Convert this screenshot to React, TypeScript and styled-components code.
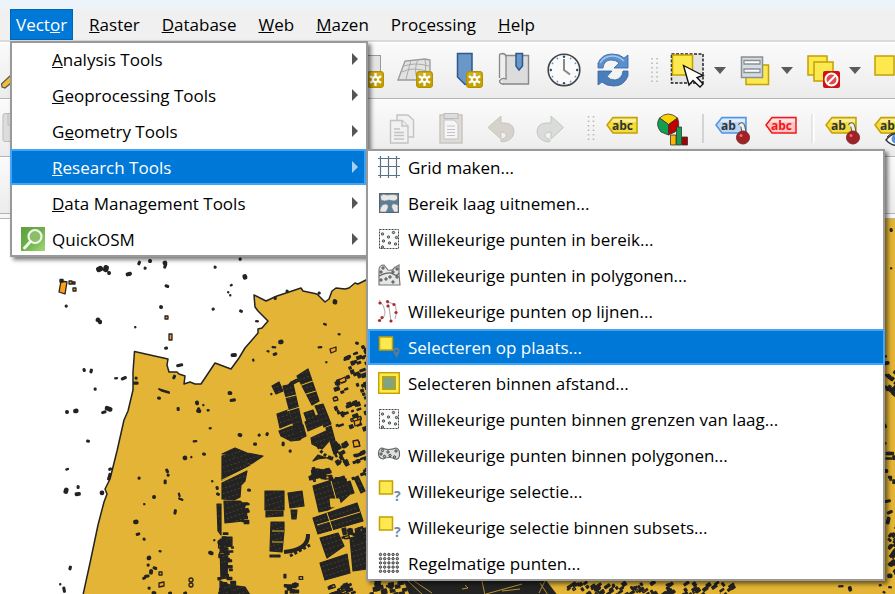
import React from 'react';
import styled, { createGlobalStyle, css } from 'styled-components';

const GlobalStyle = createGlobalStyle`
  *, *::before, *::after { box-sizing: border-box; }
  body { margin: 0; background: #fff; overflow: hidden; }
  body, button { font-family: "Open Sans", "Noto Sans", sans-serif; font-size: 17px; line-height: 24px; color: #000; }
  button { appearance: none; border: 0; margin: 0; padding: 0; background: none; text-align: left; }
  svg { display: block; }
`;

const Page = styled.div`
  display: flex;
  flex-direction: column;
  height: 100vh;
  overflow: hidden;
`;

const TitleStrip = styled.div`
  flex: 0 0 9px;
  background: #edf3fb;
`;

const MenuBar = styled.nav`
  flex: 0 0 32px;
  display: flex;
  align-items: flex-start;
  gap: 10px;
  padding-left: 10px;
  background: #f0f0f0;
  border-bottom: 2px solid #dadada;
`;

const MenuSlot = styled.div`
  position: relative;
`;

const MenuTitle = styled.button<{ $open?: boolean }>`
  display: block;
  height: 31px;
  padding: 0 5px;
  white-space: nowrap;
  border: 1px solid transparent;
  ${p => p.$open && css`
    background: #0078d7;
    border-color: #0065b5;
    color: #fff;
  `}
`;

const Menu = styled.div<{ $sub?: boolean }>`
  position: absolute;
  z-index: ${p => (p.$sub ? 3 : 2)};
  top: ${p => (p.$sub ? '0' : '32px')};
  left: ${p => (p.$sub ? '356px' : '0')};
  width: ${p => (p.$sub ? '519px' : '358px')};
  background: #fff;
  box-shadow: inset 0 0 0 2px #999, 3px 3px 4px rgba(0, 0, 0, 0.5);
`;

const ItemSlot = styled.div`
  position: relative;
`;

const Item = styled.button<{ $active?: boolean; $sub?: boolean }>`
  display: flex;
  align-items: center;
  width: calc(100% - 2px);
  margin-left: ${p => (p.$sub ? '2px' : '0')};
  height: 36px;
  padding: ${p => (p.$sub ? '0 8px 0 7px' : '0 5px 0 9px')};
  gap: ${p => (p.$sub ? '7px' : '6px')};
  white-space: nowrap;
  border: 2px solid transparent;
  ${p => p.$active && css`
    background: #0078d7;
    border-color: #42a5f5;
    color: #fff;
  `}
`;

const ItemIcon = styled.span<{ $sub?: boolean }>`
  flex: 0 0 ${p => (p.$sub ? '24px' : '25px')};
  height: 24px;
  svg { overflow: visible; }
`;

const ItemLabel = styled.span`
  flex: 1;
  padding-top: 2px;
`;

const ToolBar = styled.div`
  flex: 0 0 57px;
  display: flex;
  overflow: hidden;
  background: linear-gradient(#fbfbfb, #ececec);
  border-bottom: 1px solid #b4b4b4;
  box-shadow: inset 0 1px #fff;
`;

const LowerBar = styled(ToolBar)`
  flex-basis: 58px;
`;

const BarGap = styled.div`
  flex: 0 0 5px;
  background: #f7f7f7;
  border-bottom: 1px solid #b4b4b4;
`;

const Leading = styled.div<{ $w: number }>`
  flex: 0 0 ${p => p.$w}px;
`;

const Tool = styled.button<{ $w?: number }>`
  flex: 0 0 ${p => p.$w ?? 49}px;
  height: 56px;
`;

const MapCanvas = styled.main`
  flex: 1;
  min-height: 0;
  overflow: hidden;
  background: #fff;
  svg { width: 100%; height: 100%; }
`;

/* ---------- toolbar drawings ---------- */

const Art = ({ x, y, w, children }: { x: number; y: number; w: number; children: React.ReactNode }) => (
  <svg width={w} height={56} viewBox={`${x} ${y} ${w} 56`} aria-hidden="true">{children}</svg>
);

const Star = ({ x, y }: { x: number; y: number }) => (
  <g transform={`translate(${x} ${y})`}>
    <rect x="0.5" y="0.5" width="16" height="16" rx="2.5" fill="#c4a000" stroke="#b39200" />
    <rect x="1.5" y="1.5" width="14" height="6" rx="2" fill="#d6b93c" opacity=".6" />
    <g stroke="#fff" strokeWidth="2.2"><path d="M8.5 2V15M2.9 5.2L14.1 11.8M14.1 5.2L2.9 11.8" /></g>
    <circle cx="8.5" cy="8.5" r="3.6" fill="#fff" />
    <circle cx="8.5" cy="8.5" r="1.6" fill="#c4a000" />
  </g>
);

const Yellow = ({ x, y, s }: { x: number; y: number; s: number }) => (
  <rect x={x} y={y} width={s} height={s} fill="#fce94f" stroke="#c4a000" strokeWidth="1.5" />
);

const Arrow = ({ x }: { x: number }) => <path d={`M${x} 66H${x + 12}L${x + 6} 73Z`} fill="#5a5a5a" />;

const Grip = ({ x, y }: { x: number; y: number }) => (
  <g stroke="#b5b5b5" strokeWidth="1.5" strokeDasharray="1.5 3"><path d={`M${x} ${y}v25M${x + 5} ${y}v25`} /></g>
);

const Tag = ({ x, stroke, fill, text, color = '#2e3436' }: { x: number; stroke: string; fill: string; text: string; color?: string }) => (
  <g>
    <path d={`M${x + 1} 124L${x + 7} 116.5H${x + 31}V132H${x + 7}Z`} fill={fill} stroke={stroke} strokeWidth="1.5" />
    <path d={`M${x + 7} 118H${x + 30}V121H${x + 5}Z`} fill="#fff" opacity=".5" />
    <text x={x + 6} y="128.5" fontFamily="Open Sans" fontWeight="700" fontSize="12" fill={color}>{text}</text>
  </g>
);

const Pin = ({ x }: { x: number }) => (
  <g>
    <path d={`M${x - 2} 125Q${x} 122 ${x + 1} 126L${x + 2} 132`} fill="none" stroke="#555" strokeWidth="5" />
    <path d={`M${x - 2} 125Q${x} 122 ${x + 1} 126L${x + 2} 132`} fill="none" stroke="#eee" strokeWidth="3" />
    <circle cx={x + 1} cy="136.5" r="6.5" fill="#a32024" stroke="#7d2b2d" />
    <circle cx={x - 1} cy="134.5" r="1.5" fill="#d77" />
  </g>
);

const Mesh = () => (
  <>
    <path d="M398 79L405 60 425 58 430 59V77L417 79Z" fill="#e2e2e2" stroke="#999" strokeWidth="1.3" />
    <path d="M402 71Q412 65 430 71M404 65Q415 61 429 65M411 59L406 78M418 58Q413 70 418 79M425 58Q427 70 423 79" fill="none" stroke="#aaa" />
  </>
);

const ClockTicks = Array.from({ length: 12 }, (_, i) => i * 30);

const TopTools = () => (
  <ToolBar>
    <Leading $w={342}>
      <Tool aria-label="Edit"><Art x={0} y={41} w={49}><path d="M1.5 83L11 74 16 78 5 87 2 86Z" fill="#edbf3a" stroke="#555" strokeWidth="1.2" /></Art></Tool>
    </Leading>
    <Tool aria-label="New layer"><Art x={342} y={41} w={49}><rect x="350.5" y="54.5" width="30" height="30" fill="#e4e4e4" stroke="#999" /><Star x={367} y={70} /></Art></Tool>
    <Tool aria-label="New mesh layer"><Art x={391} y={41} w={49}><Mesh /><Star x={416} y={70} /></Art></Tool>
    <Tool aria-label="New bookmark"><Art x={440} y={41} w={49}><path d="M457.5 52.5H472V82L465 83.5 457.5 76Z" fill="#6b96c8" stroke="#2c5a8e" strokeWidth="1.5" /><Star x={466} y={70} /></Art></Tool>
    <Tool aria-label="Show bookmarks">
      <Art x={489} y={41} w={49}>
        <path d="M501 54.5H528.5V83H503Q499 82 500 79" fill="#dcdcdc" stroke="#888" strokeWidth="1.4" />
        <path d="M499.5 77V54Q500 52.5 503 52.5Q506 53 506 56V78Q502 76 499.5 80Q500 83 504 83" fill="#eee" stroke="#888" strokeWidth="1.3" />
        <path d="M516 52.5H522.5V65L519 69 516 65Z" fill="#6b96c8" stroke="#2c5a8e" strokeWidth="1.5" />
      </Art>
    </Tool>
    <Tool aria-label="Temporal controller">
      <Art x={538} y={41} w={49}>
        <circle cx="564" cy="69" r="15.8" fill="#fafafa" stroke="#444" strokeWidth="1.6" />
        {ClockTicks.map(a => <circle key={a} cx="564" cy="55.8" r={a % 90 ? 0.9 : 1.2} fill={a % 90 ? '#5b93d6' : '#1f4e79'} transform={`rotate(${a} 564 69)`} />)}
        <path d="M564 58V69L570 73.5" fill="none" stroke="#888" strokeWidth="2" />
      </Art>
    </Tool>
    <Tool aria-label="Refresh">
      <Art x={587} y={41} w={49}>
        <path d="M598 67V62Q602 53 612 53Q620 53 624 57L628 54V67H614L619 62Q616 59 611 59Q604 59 603 67Z" fill="#5b8fce" stroke="#3465a4" strokeWidth=".8" />
        <path d="M628 70V75Q624 85 614 85Q606 85 602 81L598 84V70H612L607 75.5Q610 79 615 79Q622 78 623 70Z" fill="#4a7ebb" stroke="#3465a4" strokeWidth=".8" />
        <path d="M600 62Q604 55 612 55Q619 55 624 60" fill="none" stroke="#a8c6e8" strokeWidth="1.4" />
      </Art>
    </Tool>
    <Leading $w={32}><Art x={636} y={41} w={32}><Grip x={652} y={57} /></Art></Leading>
    <Tool aria-label="Select features" $w={68}>
      <Art x={668} y={41} w={68}>
        <rect x="671.5" y="53" width="31.5" height="29" fill="#e4e4e4" stroke="#222" strokeWidth="1.5" strokeDasharray="3 1.5" />
        <Yellow x={672.5} y={54} s={20} />
        <path d="M683.5 64.5L689 84 693 79.5 700 86 703 83 697 76.5 703 74.5Z" fill="#fff" stroke="#111" strokeWidth="1.4" />
        <Arrow x={714} />
      </Art>
    </Tool>
    <Tool aria-label="Select by value" $w={66}>
      <Art x={736} y={41} w={66}>
        <path d="M746 64H768.5V83.5H746Z" fill="#fce94f" stroke="#c4a000" strokeWidth="1.5" />
        <rect x="741.5" y="56" width="21" height="20.5" fill="#d4dde3" stroke="#8a8f94" strokeWidth="1.5" />
        <path d="M744 59.5H760V63H744ZM744 68H760V71.5H744Z" fill="#fff" stroke="#8a8f94" strokeWidth="1.3" />
        <Arrow x={781} />
      </Art>
    </Tool>
    <Tool aria-label="Deselect" $w={68}>
      <Art x={802} y={41} w={68}>
        <Yellow x={808} y={55} s={19} /><Yellow x={814} y={61} s={19} />
        <rect x="823" y="70" width="17" height="17" rx="2" fill="#cc1414" />
        <circle cx="831.5" cy="78.5" r="6" fill="#e04a4a" stroke="#fff" strokeWidth="2" /><path d="M827.5 82.5L835.5 74.5" stroke="#fff" strokeWidth="2" />
        <Arrow x={849} />
      </Art>
    </Tool>
    <Tool aria-label="Select all"><Art x={870} y={41} w={49}><Yellow x={875} y={55} s={19} /></Art></Tool>
  </ToolBar>
);

const LowerTools = () => (
  <LowerBar>
    <Leading $w={378}>
      <Tool aria-label="Save"><Art x={0} y={98} w={49}><rect x="3" y="112.5" width="30" height="28" rx="2" fill="#ddd" stroke="#bbb" /><path d="M8 113V124H20" fill="none" stroke="#bbb" /></Art></Tool>
    </Leading>
    <Tool aria-label="Copy">
      <Art x={378} y={98} w={49}>
        <g fill="#f1f1f1" stroke="#c3c3c3" strokeWidth="1.4">
          <path d="M397 114H408L413.5 119V136H397Z" /><path d="M390.5 119.5H402L408 125V142H390.5Z" />
          <path d="M402 120V125H408M394 128H400M394 131.5H404M394 134.5H404M394 138H404" />
        </g>
      </Art>
    </Tool>
    <Tool aria-label="Paste">
      <Art x={427} y={98} w={49}>
        <rect x="440" y="114" width="22" height="28" fill="#dedbd7" stroke="#c9c6c2" strokeWidth="1.5" />
        <path d="M444 119H454L458 123V138H444Z" fill="#f5f5f5" stroke="#c3c3c3" />
        <path d="M447 125H455M447 128.5H455M447 131.5H455M447 134.5H455" stroke="#c3c3c3" />
        <rect x="444" y="112.5" width="14" height="5" fill="#ddd" stroke="#bbb" />
      </Art>
    </Tool>
    <Tool aria-label="Undo"><Art x={476} y={98} w={49}><path d="M488 126.5L501 115V122H504Q514 122 514 131Q513 140 502 141Q499 140 502 138Q507 137 506 133Q505 131 501 131V138Z" fill="#d8d2cd" stroke="#c9c4bf" /></Art></Tool>
    <Tool aria-label="Redo"><Art x={525} y={98} w={49}><path d="M563.5 126.5L551 115V122H547Q537 122 537 131Q538 140 549 141Q552 140 549 138Q544 137 545 133Q546 131 551 131V138Z" fill="#d9dcd8" stroke="#c3c7c2" /></Art></Tool>
    <Leading $w={24}><Art x={574} y={98} w={24}><Grip x={588.5} y={115} /></Art></Leading>
    <Tool aria-label="Layer labels"><Art x={598} y={98} w={49}><Tag x={606} stroke="#c4a000" fill="#f4dc3c" text="abc" /></Art></Tool>
    <Tool aria-label="Layer diagrams" $w={50}>
      <Art x={647} y={98} w={50}>
        <g stroke="#333" strokeWidth=".8">
          <path d="M668.5 123.5L659.5 117Q668 109 677.5 117Z" fill="#fcd200" />
          <path d="M668.5 123.5L659.5 117Q655 124 661 131L668.5 134Z" fill="#12a050" />
          <path d="M668.5 123.5L677.5 117Q681 126 675 131L668.5 134Z" fill="#c00000" />
          <path d="M670.5 134H676V144H670.5Z" fill="#fcb800" /><path d="M676.5 126H681.5V144H676.5Z" fill="#12a050" /><path d="M682 136H687.5V144H682Z" fill="#a80000" />
        </g>
      </Art>
    </Tool>
    <Leading $w={12}><Art x={697} y={98} w={12}><path d="M703 113V142" stroke="#c9c9c9" strokeWidth="1.5" /></Art></Leading>
    <Tool aria-label="Pin labels"><Art x={709} y={98} w={49}><Tag x={715} stroke="#5094e4" fill="#bad6f7" text="ab" /><Pin x={742} /></Art></Tool>
    <Tool aria-label="Unplaced labels"><Art x={758} y={98} w={49}><Tag x={765} stroke="#f01818" fill="#ffc4c4" text="abc" color="#f01818" /></Art></Tool>
    <Leading $w={12}><Art x={807} y={98} w={12}><path d="M813.5 113V142" stroke="#fff" strokeWidth="2" /><path d="M812 113V142" stroke="#d5d5d5" /></Art></Leading>
    <Tool aria-label="Pin or unpin labels"><Art x={819} y={98} w={49}><Tag x={825} stroke="#c4a000" fill="#f4dc3c" text="ab" /><Pin x={852} /></Art></Tool>
    <Tool aria-label="Show or hide labels">
      <Art x={868} y={98} w={49}>
        <Tag x={874} stroke="#c4a000" fill="#f4dc3c" text="ab" />
        <path d="M886 139Q896 126 910 139Q896 150 886 139Z" fill="#fff" stroke="#333" strokeWidth="1.4" /><circle cx="896" cy="138" r="4.5" fill="#5b93d6" /><path d="M887 136Q892 130 899 133" fill="none" stroke="#333" />
      </Art>
    </Tool>
  </LowerBar>
);

/* ---------- menu drawings, each on a 24px square ---------- */

const dotsIn = (pts: number[][], r = 1.2) => pts.map(([x, y]) => <circle key={`${x}-${y}`} cx={x} cy={y} r={r} fill="#a9b8aa" stroke="#2f3b33" strokeWidth=".8" />);

const RandomBox = () => (
  <>
    <rect x="2.5" y="2.5" width="19" height="19" fill="#fafafa" stroke="#444" strokeDasharray="2 1" />
    {dotsIn([[5.5, 7], [16.5, 5.5], [11.5, 10], [19.5, 10.5], [6.5, 14], [12.5, 16], [18.5, 17], [5.5, 20]])}
  </>
);

const SelectMark = () => (
  <>
    <Yellow x={2.5} y={2} s={13} />
    <text x="17" y="22" fontFamily="Open Sans" fontWeight="700" fontSize="14" fill="#6f8ba5">?</text>
  </>
);

const dotGrid = Array.from({ length: 25 }, (_, i) => [3.5 + (i % 5) * 4.2, 3.5 + Math.floor(i / 5) * 4.2]);

const art: Record<string, React.ReactNode> = {
  grid: <path d="M1 3.5H23M1 11.5H23M1 20.5H23M3.5 1V23M11.5 1V23M19.5 1V23" stroke="#5a7284" strokeWidth="1.2" />,
  extent: (
    <>
      <rect x="2.5" y="2.5" width="19" height="19" fill="#5b7f98" stroke="#4e6575" />
      <g fill="#e8e8e8" stroke="#777" strokeWidth=".6">
        <path d="M3.5 5Q6 2 10 4Q15 3 20 4Q22 9 17 10L12 9Q7 11 4 9Z" /><path d="M3 20.5Q3 14 8 13Q12 13 11 17L9 21H3Z" /><path d="M21 21H17L14.5 16Q15 12 18 13L21 14Z" />
      </g>
    </>
  ),
  box: <RandomBox />,
  polygons: (
    <>
      <path d="M2 22V7Q2 2 7 2L11 7Q16 8 17 5L22 2V11L23 22Z" fill="#e6e6e6" stroke="#777" strokeWidth="1.2" />
      <path d="M2 13Q12 8 16 11T22 10" fill="none" stroke="#666" strokeWidth="1.3" />
      {dotsIn([[6, 5], [4, 9], [16, 9], [20, 6], [4, 17], [9, 16], [13, 14], [20, 14], [16, 19]])}
    </>
  ),
  lines: (
    <>
      <path d="M2 1Q8 7 8 13T2 22M10.5 3L12 8 14 23M10.5 3L17 5Q21 10 18 20" fill="none" stroke="#aaa" />
      {[[3, 4], [5, 18.5], [2.5, 21.5], [10.5, 2.5], [11, 7], [17, 5.5], [19, 13.5], [14, 22]].map(([x, y]) => <circle key={`${x}-${y}`} cx={x} cy={y} r="1.6" fill="#a82a30" />)}
    </>
  ),
  place: <><Yellow x={2.5} y={2} s={13} /><path d="M19.5 23L16.5 17Q16 12.5 19.5 12.5Q23 12.5 22.5 17Z" fill="#5f7b92" /><circle cx="19.5" cy="16" r="1.3" fill="#0078d7" /></>,
  distance: <><rect x="1.7" y="1.7" width="20.6" height="20.6" fill="#fce94f" stroke="#c4a000" strokeWidth="1.4" /><rect x="5.7" y="5.7" width="12.6" height="12.6" fill="#7fa47f" stroke="#c4a000" strokeWidth="1.4" /></>,
  blob: (
    <>
      <path d="M5 5Q11 8 19 5Q23 6 22.5 12Q22 17 18 16Q12 13 6 16Q1 15 1.5 10Q2 5 5 5Z" fill="#dedede" stroke="#666" strokeWidth="1.2" />
      {dotsIn([[5.5, 7.5], [4, 11], [11, 9], [19, 8], [7.5, 13.5], [13, 12.5], [17.5, 14]])}
    </>
  ),
  subset: <SelectMark />,
  regular: <>{dotGrid.map(([x, y]) => <circle key={`${x}-${y}`} cx={x} cy={y} r="1.2" fill="#aaa" stroke="#333" strokeWidth=".9" />)}</>,
  osm: (
    <>
      <defs><linearGradient id="osm" x1="0" y1="0" x2="1" y2="1"><stop offset="0" stopColor="#5f9e43" /><stop offset=".5" stopColor="#6cb147" /><stop offset="1" stopColor="#a3d67c" /></linearGradient></defs>
      <rect width="24" height="24" fill="url(#osm)" />
      <circle cx="14" cy="9.5" r="6.5" fill="#8bbf68" stroke="#f1f7ec" strokeWidth="2.2" /><path d="M9.5 14.5L3.5 21" stroke="#f1f7ec" strokeWidth="3" strokeLinecap="round" />
    </>
  ),
};

const MenuArt = ({ name }: { name: string }) => <svg width="24" height="24" viewBox="0 0 24 24" aria-hidden="true">{art[name]}</svg>;

const researchItems: [string, string][] = [
  ['grid', 'Grid maken...'],
  ['extent', 'Bereik laag uitnemen...'],
  ['box', 'Willekeurige punten in bereik...'],
  ['polygons', 'Willekeurige punten in polygonen...'],
  ['lines', 'Willekeurige punten op lijnen...'],
  ['place', 'Selecteren op plaats...'],
  ['distance', 'Selecteren binnen afstand...'],
  ['box', 'Willekeurige punten binnen grenzen van laag...'],
  ['blob', 'Willekeurige punten binnen polygonen...'],
  ['subset', 'Willekeurige selectie...'],
  ['subset', 'Willekeurige selectie binnen subsets...'],
  ['regular', 'Regelmatige punten...'],
];

/* Labels carry an ampersand before their access key. */
const Keyed = ({ text }: { text: string }) => {
  const i = text.indexOf('&');
  return i < 0 ? <>{text}</> : <>{text.slice(0, i)}<u>{text[i + 1]}</u>{text.slice(i + 2)}</>;
};

const vectorItems = ['&Analysis Tools', '&Geoprocessing Tools', 'G&eometry Tools', '&Research Tools', '&Data Management Tools', 'QuickOSM'];

const VectorMenu = () => (
  <Menu role="menu">
    {vectorItems.map(text => {
      const active = text === '&Research Tools';
      return (
        <ItemSlot key={text}>
          <Item role="menuitem" $active={active}>
            <ItemIcon>{text === 'QuickOSM' && <MenuArt name="osm" />}</ItemIcon>
            <ItemLabel><Keyed text={text} /></ItemLabel>
            <svg width="8" height="12" viewBox="0 0 8 12" aria-hidden="true"><path d="M1 0L7 6 1 12Z" fill={active ? '#a8d0f2' : '#555'} /></svg>
          </Item>
          {active && (
            <Menu role="menu" $sub>
              {researchItems.map(([icon, label]) => (
                <Item key={label} role="menuitem" $sub $active={icon === 'place'}>
                  <ItemIcon $sub><MenuArt name={icon} /></ItemIcon>
                  <ItemLabel>{label}</ItemLabel>
                </Item>
              ))}
            </Menu>
          )}
        </ItemSlot>
      );
    })}
  </Menu>
);

/* ---------- map ---------- */

const INK = '#232323';
const LAND = '#e3b435';
const ORANGE = '#ff9e17';

const coast = 'M83 594L90 562 98 524 104 501 107 493 105 488 110 478 117 450 124 419 128 410 133 389 133 371 134.5 350.5 168 358 167 364 169 371 177 371 179 373 185 375 184 383 190 381 195 383 201 383 209 371 215 362 231 368 239 357 245 347 258 332 258 328 262 327 268 320 258 310 255 306 254 294 266 300 277 295 301 287 303 290 317 293 325 301 329 298 332 290 336 287 345 288 349 287 355 282 358 283 366 279 400 255 500 200 900 200 900 600 83 600Z';

const spots = [
  [100, 268, 6, 4], [106, 268, 4, 6], [109, 272, 2, 2], [129, 273, 5, 2], [139, 262, 1, 3], [145, 267, 1, 1], [150, 260, 2, 2], [165, 262, 3, 3], [165, 265, 1, 4], [215, 266, 1, 1], [240, 258, 1, 1], [245, 276, 3, 4],
  [167, 285, 3, 1], [161, 306, 2, 2], [166, 347, 2, 1], [66, 305, 1, 1], [98, 319, 3, 3], [100, 321, 2, 3], [135, 326, 0, 0], [84, 369, 1, 2], [91, 370, 1, 3], [95, 388, 1, 1], [116, 377, 2, 0], [124, 377, 5, 1], [136, 377, 1, 1], [136, 382, 4, 1],
  [180, 364, 6, 1], [174, 376, 1, 3], [159, 397, 2, 1], [178, 408, 1, 2], [197, 402, 2, 3], [198, 409, 1, 4], [67, 411, 2, 2], [76, 410, 4, 3], [104, 411, 4, 1], [109, 408, 7, 3], [88, 440, 2, 1], [195, 440, 3, 0], [67, 468, 2, 0],
  [66, 490, 3, 5], [78, 486, 1, 2], [78, 493, 5, 2], [110, 468, 2, 1], [109, 476, 1, 7], [102, 492, 3, 3], [185, 457, 3, 3], [191, 456, 0, 0], [139, 477, 1, 1], [154, 496, 2, 2], [144, 503, 0, 0], [167, 470, 1, 3], [168, 474, 1, 1], [165, 481, 1, 3],
  [179, 494, 0, 3], [181, 498, 4, 0], [175, 511, 1, 4], [136, 521, 4, 3], [138, 533, 3, 1], [144, 538, 1, 1], [160, 550, 1, 0], [149, 557, 3, 3], [148, 564, 1, 1], [155, 567, 3, 1], [151, 571, 2, 4], [147, 575, 4, 1], [144, 577, 2, 1], [149, 587, 1, 1], [154, 592, 3, 2], [170, 592, 2, 1], [185, 592, 2, 1], [70, 567, 1, 3], [60, 583, 0, 0], [64, 589, 1, 5],
  [231, 284, 1, 0], [228, 291, 0, 0], [230, 294, 0, 0], [213, 308, 1, 1], [241, 310, 2, 1], [257, 320, 2, 0], [234, 354, 5, 2], [253, 359, 0, 1], [268, 350, 1, 0], [274, 346, 3, 0], [281, 341, 4, 3], [275, 353, 3, 1], [325, 323, 2, 0], [339, 333, 1, 0], [320, 346, 3, 0], [326, 361, 0, 0], [357, 342, 2, 1], [335, 301, 3, 4], [275, 297, 1, 2], [319, 292, 1, 1], [287, 290, 1, 1],
  [230, 392, 3, 2], [233, 399, 5, 1], [203, 404, 0, 0], [199, 410, 3, 2], [208, 409, 1, 0], [210, 427, 1, 0], [271, 393, 0, 0], [240, 434, 3, 2], [255, 443, 2, 1], [259, 434, 1, 1], [267, 433, 1, 2], [204, 453, 2, 1], [212, 480, 0, 0], [217, 487, 1, 2], [218, 493, 2, 1], [249, 489, 2, 1], [248, 503, 1, 0], [214, 539, 0, 0], [211, 552, 4, 2], [283, 443, 1, 3], [290, 450, 1, 1],
  [891, 229, 1, 2], [891, 267, 0, 0], [885, 355, 2, 0], [887, 362, 4, 2], [885, 425, 1, 3], [885, 442, 1, 0], [886, 470, 3, 2], [888, 500, 5, 1], [890, 511, 5, 1], [888, 520, 2, 7], [890, 575, 4, 3], [880, 584, 1, 0], [884, 591, 1, 0], [890, 586, 2, 0], [841, 585, 4, 0], [850, 588, 2, 4],
];

const blocks = [
  '283,385 293,383 303,427 295,430', '297,375 308,368 319,400 312,404', '291,381 297,378 299,380 286,387', '272,385 279,381 283,390 276,393',
  '277,413 288,409 292,422 280,427', '279,430 292,425 305,432 300,439 291,440 281,435', '305,421 318,414 322,424 308,430', '315,405 323,403 331,423 324,426',
  '311,437 326,430 329,440 322,448 312,443', '326,427 331,425 338,451 334,453', '304,412 313,409 316,417 307,420', '295,428 303,424 306,435 300,438',
  '222,453 235,447 247,452 263,455 251,463 244,460 231,453', '222,455 229,453 250,464 222,479', '222,482 247,470 245,480 241,484 240,496 234,499 222,498', '224,500 240,500 245,504 243,520 225,522',
  '217,503 221,503 221,534 218,530', '223,536 232,536 232,545 223,545', '220,545 228,547 227,577 221,578', '220,580 230,584 245,586 250,594 220,594',
  '265,490 284,490 284,509 265,509', '288,492 302,490 304,505 290,507', '266,510 283,510 283,515 266,516', '291,509 297,509 296,518 292,518', '271,521 284,521 284,530 282,551 270,550', '270,554 280,554 280,556 270,556',
  '313,485 344,475 350,493 339,503 328,509 319,511', '313,517 357,502 363,520 318,533', '320,537 338,532 344,545 327,557', '320,562 347,553 350,572 325,579', '350,537 367,533 367,568 353,570',
  '347,481 350,480 354,492 351,493', '354,477 358,475 365,490 361,492', '313,460 318,458 333,456 332,459 318,454',
];

/* Small repeatable scatter of buildings inside a rectangle. */
const scatter = (seed: number, x: number, y: number, w: number, h: number, n: number) => {
  let s = seed;
  const rnd = () => ((s = (s * 16807) % 2147483647) / 2147483647);
  return Array.from({ length: n }, () => ({ x: x + rnd() * w, y: y + rnd() * h, w: 1.5 + rnd() * 4, h: 1 + rnd() * 2.5, o: rnd() > 0.88 }));
};

const towns: [number, number, number, number, number, number, number][] = [
  [11, 344, 345, 22, 30, 22, -20], [17, 334, 375, 32, 52, 42, -20], [37, 309, 467, 20, 10, 34, -15], [41, 335, 437, 12, 24, 18, 60], [53, 352, 438, 14, 40, 16, -20], [61, 284, 573, 20, 18, 13, 0],
  [71, 328, 582, 24, 12, 26, -20], [83, 342, 527, 24, 10, 22, -15], [97, 218, 525, 14, 68, 34, 0], [101, 567, 582, 170, 14, 90, -35], [113, 370, 580, 34, 14, 24, -10], [127, 886, 368, 10, 24, 16, 40], [131, 886, 450, 10, 30, 8, 0], [139, 888, 525, 10, 48, 30, -50], [151, 242, 500, 4, 22, 9, 0], [163, 312, 474, 34, 4, 10, 0],
];

const MapView = () => (
  <MapCanvas>
    <svg viewBox="0 218 895 376" preserveAspectRatio="xMinYMin slice" role="img" aria-label="Map">
      <defs>
        <pattern id="roofs" width="4" height="5" patternUnits="userSpaceOnUse" patternTransform="rotate(-18)">
          <rect width="4" height="5" fill={INK} /><path d="M0 2.5H1.5" stroke="#77622b" strokeWidth=".6" />
        </pattern>
      </defs>
      <path d={coast} fill={LAND} stroke={INK} strokeWidth="1.5" strokeLinejoin="round" />
      <g fill={INK} stroke={INK} strokeWidth="1.8" strokeLinejoin="round">
        {spots.map(([x, y, w, h], i) => <rect key={i} x={x - w / 2} y={y - h / 2} width={w * 0.8 + 0.5} height={h * 0.8 + 0.5} rx={Math.min(w, h) * 0.4} transform={`rotate(${(i * 37) % 50 - 25} ${x} ${y})`} />)}
        <path d="M159 388L169 391 169 392 162 390Z" />
      </g>
      <g fill="url(#roofs)" stroke={INK} strokeWidth="1.2" strokeLinejoin="round">
        {blocks.map(p => <polygon key={p} points={p} />)}
      </g>
      <path d="M284 551Q309 549 308 533" fill="none" stroke={INK} strokeWidth="4" />
      <path d="M290 555L310 544M318 445Q322 455 333 457" fill="none" stroke={INK} strokeWidth="3" strokeDasharray="3 2" />
      <path d="M330 498L339 498 341 505 331 506ZM222 479L249 466M284 397L296 394M287 410L300 406M299 385L313 380M303 394L316 390M272 530H284M272 541H283M317 524L360 511M331 480L338 505M327 512L333 530" fill={LAND} stroke={LAND} strokeWidth="1" />
      <path d="M403 578H545L562 600H412Z" fill={INK} />
      <path d="M408 580L423 594M414 580L432 592M465 584L468 587 462 588M482 580L485 594M486 593L522 583M540 582L548 594M539 592L545 580M502 590L520 588" fill="none" stroke="#b7942f" strokeWidth="1" />
      {towns.map(([seed, x, y, w, h, n, rot]) => scatter(seed, x, y, w, h, n).map((b, i) => (
        <rect key={`${seed}-${i}`} x={b.x} y={b.y} width={b.w} height={b.h} fill={b.o ? ORANGE : INK} stroke={INK} strokeWidth="1.3" strokeLinejoin="round" transform={`rotate(${rot} ${b.x} ${b.y})`} />
      )))}
      <g fill={ORANGE} stroke={INK} strokeWidth="1.3" strokeLinejoin="round">
        <path d="M61 280L67 281 65 293 59 291Z" /><path d="M60 278.500H63V281H60Z" fill={INK} /><path d="M69 280H72V283H69ZM73 281H75V283H73ZM73 287H76V290H73Z" />
        <path d="M165 315H168V318H165ZM169 333H172V339H169ZM159 582L164 581 164 585 159 586ZM159 571L162 571 162 574 159 574ZM339 379L345 376 346 380 340 382ZM333 397L337 396 338 399 334 400ZM330 348L336 346 336 350 331 352ZM354 420L361 418 360 423 355 425ZM353 440L358 439 360 445 354 446Z" />
        <circle cx="191" cy="579" r="2" /><circle cx="191" cy="584" r="2" />
      </g>
    </svg>
  </MapCanvas>
);

const titles = ['&Raster', '&Database', '&Web', '&Mazen', 'Pro&cessing', '&Help'];

export default function App() {
  return (
    <Page>
      <GlobalStyle />
      <TitleStrip />
      <MenuBar>
        <MenuSlot>
          <MenuTitle $open aria-haspopup="menu" aria-expanded="true"><Keyed text="Vect&or" /></MenuTitle>
          <VectorMenu />
        </MenuSlot>
        {titles.map(t => <MenuSlot key={t}><MenuTitle aria-haspopup="menu"><Keyed text={t} /></MenuTitle></MenuSlot>)}
      </MenuBar>
      <TopTools />
      <LowerTools />
      <ToolBar />
      <BarGap />
      <MapView />
    </Page>
  );
}
